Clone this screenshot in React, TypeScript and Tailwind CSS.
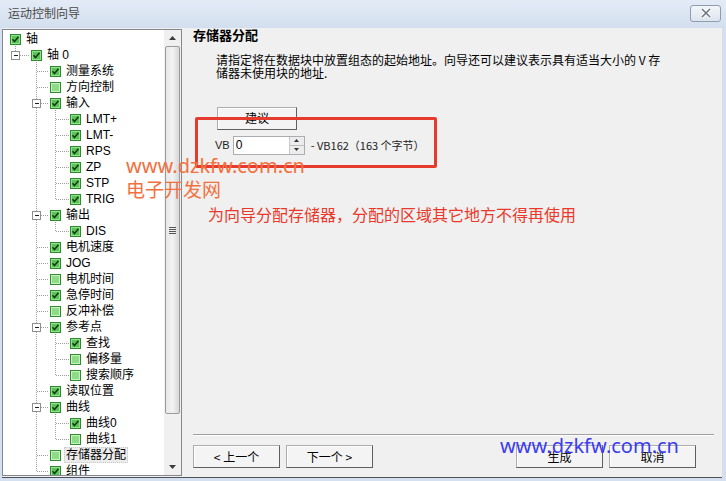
import React from 'react';

type Row = { level: number; label: string; checked: boolean; open?: boolean; selected?: boolean };

const rows: Row[] = [
  { level: 0, label: '轴', checked: true },
  { level: 1, label: '轴 0', checked: true, open: true },
  { level: 2, label: '测量系统', checked: true },
  { level: 2, label: '方向控制', checked: false },
  { level: 2, label: '输入', checked: true, open: true },
  { level: 3, label: 'LMT+', checked: true },
  { level: 3, label: 'LMT-', checked: true },
  { level: 3, label: 'RPS', checked: true },
  { level: 3, label: 'ZP', checked: true },
  { level: 3, label: 'STP', checked: true },
  { level: 3, label: 'TRIG', checked: true },
  { level: 2, label: '输出', checked: true, open: true },
  { level: 3, label: 'DIS', checked: true },
  { level: 2, label: '电机速度', checked: true },
  { level: 2, label: 'JOG', checked: true },
  { level: 2, label: '电机时间', checked: false },
  { level: 2, label: '急停时间', checked: true },
  { level: 2, label: '反冲补偿', checked: false },
  { level: 2, label: '参考点', checked: true, open: true },
  { level: 3, label: '查找', checked: true },
  { level: 3, label: '偏移量', checked: false },
  { level: 3, label: '搜索顺序', checked: false },
  { level: 2, label: '读取位置', checked: true },
  { level: 2, label: '曲线', checked: true, open: true },
  { level: 3, label: '曲线0', checked: true },
  { level: 3, label: '曲线1', checked: false },
  { level: 2, label: '存储器分配', checked: false, selected: true },
  { level: 2, label: '组件', checked: true },
];

const cbX = [7, 28, 47, 67];
const indent = ['pl-[7px]', 'pl-[28px]', 'pl-[47px]', 'pl-[67px]'];
const ROW = 16;
const TOP = 1;

function TreeLines() {
  const lines: React.ReactNode[] = [];
  const boxes: React.ReactNode[] = [];
  rows.forEach((r, i) => {
    const yc = TOP + i * ROW + 8.5;
    if (r.level > 0) {
      const px = cbX[r.level - 1] + 5.5;
      lines.push(<line key={'h' + i} x1={px} y1={yc} x2={cbX[r.level] - 1} y2={yc} />);
    }
    // last direct child of this node
    let last = -1;
    for (let j = i + 1; j < rows.length && rows[j].level > r.level; j++) {
      if (rows[j].level === r.level + 1) last = j;
    }
    if (last > 0) {
      const x = cbX[r.level] + 5.5;
      lines.push(<line key={'v' + i} x1={x} y1={yc + 6} x2={x} y2={TOP + last * ROW + 8.5} />);
    }
    if (r.open && r.level > 0) {
      const px = cbX[r.level - 1] + 5.5;
      boxes.push(
        <g key={'b' + i}>
          <rect x={px - 4} y={yc - 4} width={8} height={8} fill="#fff" stroke="#8e8f8f" />
          <line x1={px - 2} y1={yc} x2={px + 2} y2={yc} stroke="#222" />
        </g>
      );
    }
  });
  return (
    <svg className="absolute left-0 top-0 pointer-events-none" width={164} height={460}>
      <g stroke="#a0a0a0" strokeDasharray="1 1" shapeRendering="crispEdges">{lines}</g>
      <g shapeRendering="crispEdges">{boxes}</g>
    </svg>
  );
}

function Check({ on }: { on: boolean }) {
  return (
    <svg width={11} height={11} className="shrink-0">
      <rect x={0.5} y={0.5} width={10} height={10} fill={on ? '#5cc45a' : '#8fdc88'} stroke="#2e8b2e" />
      <rect x={1.5} y={1.5} width={8} height={8} fill="none" stroke={on ? '#8ee38a' : '#c6f2c0'} />
      {on && <path d="M2.5 5.2 L4.5 7.5 L8.5 2.8" fill="none" stroke="#143d14" strokeWidth={1.6} />}
    </svg>
  );
}

function WinButton({ children, className = '' }: { children: React.ReactNode; className?: string }) {
  return (
    <div
      className={`h-[23px] flex items-center justify-center text-[12px] text-black bg-[#f4f4f4] border border-[#adadad] border-r-[#5f5f5f] border-b-[#5f5f5f] shadow-[inset_1px_1px_0_#fff] ${className}`}
    >
      {children}
    </div>
  );
}

export default function App() {
  return (
    <div className="w-[726px] h-[481px] bg-[#d4e0ef] flex flex-col overflow-hidden relative font-['Liberation_Sans','Noto_Sans_CJK_SC',sans-serif] text-[12px] text-black">
      {/* Title bar */}
      <div className="h-[28px] shrink-0 flex items-center justify-between pl-[8px] pr-[5px] bg-gradient-to-b from-[#e3ebf6] to-[#d3dfee]">
        <span className="text-[12px] text-[#4a4a4a]">运动控制向导</span>
        <div className="w-[31px] h-[17px] mb-[2px] rounded-[3px] border border-[#8f9caf] bg-gradient-to-b from-[#f3f6fa] to-[#dde5ef] flex items-center justify-center">
          <svg width={12} height={10} viewBox="0 0 12 10">
            <path d="M2 1 L10 9 M10 1 L2 9" stroke="#fff" strokeWidth={3.4} />
            <path d="M2 1 L10 9 M10 1 L2 9" stroke="#6d7580" strokeWidth={1.6} />
          </svg>
        </div>
      </div>

      {/* Body */}
      <div className="flex-1 min-h-0 flex ml-[2px] mr-[4px] mb-[3px] bg-[#f0f0f0] border-b border-[#4e5258]">
        {/* Tree */}
        <div className="w-[180px] shrink-0 mt-[1px] mb-[1px] border border-[#828790] bg-white flex overflow-hidden">
          <div className="relative flex-1 overflow-hidden">
            <TreeLines />
            <div className="pt-[1px]">
              {rows.map((r, i) => (
                <div key={i} className={`h-[16px] flex items-center ${indent[r.level]}`}>
                  <Check on={r.checked} />
                  <span
                    className={`leading-[14px] whitespace-nowrap ${
                      r.selected ? 'ml-[3px] bg-[#ececec] border border-dotted border-[#c8c8c8] px-[1px]' : 'ml-[5px]'
                    }`}
                  >
                    {r.label}
                  </span>
                </div>
              ))}
            </div>
          </div>
          {/* Scrollbar */}
          <div className="w-[17px] shrink-0 bg-[#f0f0f0] flex flex-col items-center">
            <div className="h-[16px] w-full flex items-center justify-center">
              <svg width={7} height={4}><path d="M0 4 L3.5 0 L7 4 Z" fill="#3c3c3c" /></svg>
            </div>
            <div className="w-[15px] h-[368px] rounded-[2px] border border-[#9b9b9b] bg-gradient-to-r from-[#e8e8e8] via-[#f2f2f2] to-[#d8d8d8] flex items-center justify-center">
              <div className="flex flex-col gap-[1px]">
                <div className="w-[7px] h-[1px] bg-[#555]" />
                <div className="w-[7px] h-[1px] bg-[#555]" />
                <div className="w-[7px] h-[1px] bg-[#555]" />
                <div className="w-[7px] h-[1px] bg-[#555]" />
              </div>
            </div>
            <div className="flex-1" />
            <div className="h-[16px] w-full flex items-center justify-center">
              <svg width={7} height={4}><path d="M0 0 L3.5 4 L7 0 Z" fill="#3c3c3c" /></svg>
            </div>
          </div>
        </div>

        {/* Right panel */}
        <div className="flex-1 flex flex-col pl-[11px] pr-[7px] relative">
          <div className="text-[13px] font-bold leading-[14px] mt-[1px]">存储器分配</div>
          <div className="ml-[23px] mt-[10px] leading-[13px] text-[12px] font-['Noto_Sans_CJK_SC',sans-serif]">
            <div>请指定将在数据块中放置组态的起始地址。向导还可以建议表示具有适当大小的 V 存</div>
            <div>储器未使用块的地址.</div>
          </div>
          <WinButton className="ml-[24px] mt-[28px] w-[80px]">建议</WinButton>
          <div className="ml-[22px] mt-[5px] flex items-center h-[20px]">
            <span className="text-[11px] text-[#222]">VB</span>
            <div className="ml-[3px] w-[72px] h-[19px] flex border border-[#abadb3] bg-white">
              <span className="flex-1 pl-[2px] text-[12px] leading-[17px]">0</span>
              <div className="w-[15px] flex flex-col border-l border-[#c8c8c8] bg-[#ececec]">
                <div className="flex-1 flex items-center justify-center border-b border-[#bdbdbd]">
                  <svg width={5} height={3}><path d="M0 3 L2.5 0 L5 3 Z" fill="#333" /></svg>
                </div>
                <div className="flex-1 flex items-center justify-center">
                  <svg width={5} height={3}><path d="M0 0 L2.5 3 L5 0 Z" fill="#333" /></svg>
                </div>
              </div>
            </div>
            <span className="ml-[6px] text-[11px] text-[#222] font-['Noto_Sans_CJK_SC',sans-serif]">- VB162（163 个字节）</span>
          </div>
          <div className="ml-[15px] mt-[50px] text-[16px] leading-[18px] text-[#e8392b] font-['Noto_Sans_CJK_SC',sans-serif]">
            为向导分配存储器，分配的区域其它地方不得再使用
          </div>

          <div className="flex-1" />
          <div className="h-[2px] border-t border-[#a0a0a0] border-b border-b-white mr-[1px]" />
          <div className="flex mt-[9px] mb-[9px] font-['Noto_Sans_CJK_SC',sans-serif]">
            <WinButton className="w-[87px]">&lt; 上一个</WinButton>
            <WinButton className="w-[87px] ml-[6px]">下一个 &gt;</WinButton>
            <div className="flex-1" />
            <WinButton className="w-[87px]">生成</WinButton>
            <WinButton className="w-[87px] ml-[6px] mr-[19px]">取消</WinButton>
          </div>

          {/* Red annotation box */}
          <div className="absolute left-[13px] top-[89px] w-[242px] h-[51px] border-[3px] border-[#e53a2e] rounded-[2px] pointer-events-none" />
        </div>
      </div>

      {/* Watermarks */}
      <div className="absolute left-[126px] top-[155px] text-[20px] leading-[22px] text-[#f2703e] font-['Noto_Sans','Noto_Sans_CJK_SC',sans-serif] pointer-events-none">
        www.dzkfw.com.cn
      </div>
      <div className="absolute left-[126px] top-[178px] text-[19px] leading-[22px] text-[#f2703e] font-['Noto_Sans_CJK_SC',sans-serif] pointer-events-none">
        电子开发网
      </div>
      <div className="absolute left-[500px] top-[435px] text-[20px] leading-[22px] text-[#3b3bf0] font-['Noto_Sans',sans-serif] pointer-events-none">
        www.dzkfw.com.cn
      </div>
    </div>
  );
}
